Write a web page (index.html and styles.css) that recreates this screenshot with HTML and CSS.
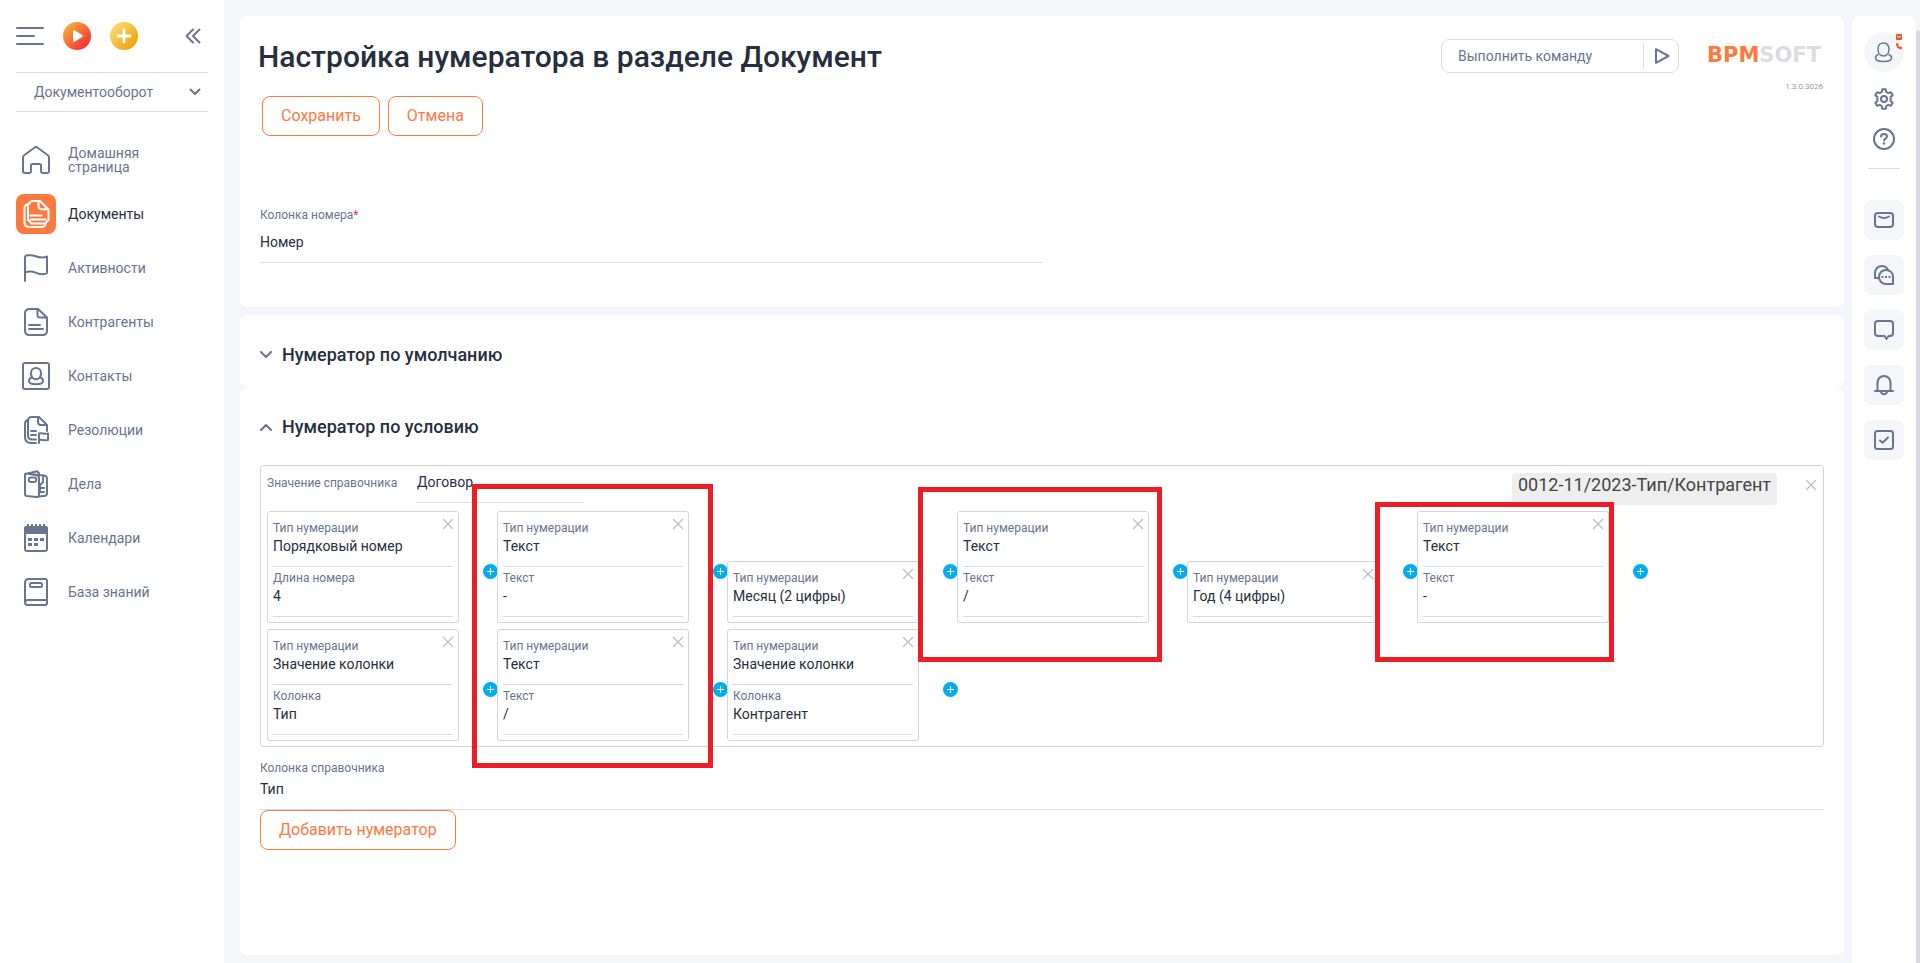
FILE: index.html
```html
<!DOCTYPE html>
<html lang="ru">
<head>
<meta charset="utf-8">
<title>Настройка нумератора в разделе Документ</title>
<link rel="stylesheet" href="styles.css">
</head>
<body>
<svg class="sprite" aria-hidden="true">
  <symbol id="close" viewBox="0 0 12 12"><path d="M1 1l10 10M11 1L1 11" fill="none" stroke="#bdbdbd" stroke-width="1.2"/></symbol>
  <symbol id="plus" viewBox="0 0 15 15"><circle cx="7.5" cy="7.5" r="7.5" fill="#00aeef"/><path d="M7.5 4v7M4 7.5h7" stroke="#fff" stroke-width="1.1"/></symbol>
</svg>
<div class="app">
  <aside class="sidebar">
    <div class="tools">
      <button class="bare" aria-label="Меню"><svg width="28" height="20" viewBox="0 0 28 20"><path d="M1 2h26M1 10h17M1 18h26" class="ln"/></svg></button>
      <button class="bare" aria-label="Запустить процесс"><svg width="28" height="28" viewBox="0 0 28 28"><defs><linearGradient id="g1" x1="0.1" y1="0.1" x2="0.85" y2="0.85"><stop offset="0" stop-color="#f9b233"/><stop offset="1" stop-color="#f72f37"/></linearGradient></defs><circle cx="14" cy="14" r="14" fill="url(#g1)"/><path d="M11 9.2v9.6l8-4.8z" fill="#fff" stroke="#fff" stroke-width="2" stroke-linejoin="round"/></svg></button>
      <button class="bare" aria-label="Добавить"><svg width="28" height="28" viewBox="0 0 28 28"><defs><linearGradient id="g2" x1="0.1" y1="0.1" x2="0.85" y2="0.85"><stop offset="0" stop-color="#fbdb78"/><stop offset="1" stop-color="#f2a30c"/></linearGradient></defs><circle cx="14" cy="14" r="14" fill="url(#g2)"/><path d="M14 8v12M8 14h12" stroke="#fff" stroke-width="2.8" stroke-linecap="round"/></svg></button>
      <button class="bare collapse" aria-label="Свернуть"><svg width="16" height="16" viewBox="0 0 16 16"><path d="M8 1.5L1.5 8 8 14.5M14.5 1.5L8 8l6.500 6.500" class="ln"/></svg></button>
    </div>
    <button class="workplace">Документооборот<svg width="12" height="8" viewBox="0 0 12 8"><path d="M1.500 1.500L6 6l4.500-4.500" class="ln"/></svg></button>
    <nav class="menu">
      <a href="#"><span class="ico"><svg viewBox="0 0 28 28"><path class="ln" d="M1 25V11.500c0-.9.400-1.700 1.100-2.300L12.300 1.700a2.700 2.700 0 0 1 3.400 0l10.200 7.500c.7.600 1.100 1.400 1.100 2.300V25c0 1.100-.9 2-2 2h-4c-1.100 0-2-.9-2-2v-5.500c0-.8-.7-1.500-1.500-1.500h-7c-.8 0-1.500.7-1.500 1.500V25c0 1.100-.9 2-2 2H3c-1.100 0-2-.9-2-2z"/></svg></span>Домашняя страница</a>
      <a href="#" class="active"><span class="ico"><svg viewBox="0 0 28 28"><path class="ln" d="M18 1H9.500L6 4.500V20l3.500 3.500H23l3.500-3.500V9.500zM16.500 1.500V6c0 2 1.200 3.300 3.500 3.300h6M8.500 15.500h11M8.500 19.500h15M6 4c-2 .5-3.500 2-3.500 4.500V22c0 3 2 5 5 5h12c2 0 3.500-1 4-3"/></svg></span>Документы</a>
      <a href="#"><span class="ico"><svg viewBox="0 0 28 28"><path class="ln" d="M3 27V3.500C3 2 4 1.500 5.500 1.300 8 1 10.500 1 13 2c4 1.600 8 2.300 12 .5v16c0 .6-.3 1-1 1.200-4 1-7 .5-10.500-1-3.500-1.500-7-1.500-10.500 0"/></svg></span>Активности</a>
      <a href="#"><span class="ico"><svg viewBox="0 0 28 28"><path class="ln" d="M16 1H7.500C4.500 1 3 2.700 3 5.500v17C3 25.300 4.500 27 7.500 27h13c3 0 4.500-1.700 4.500-4.500V9.500zM15.500 1.500V7c0 1.700.8 2.500 2.500 2.500h6.500M7 17h11M7 21h14"/></svg></span>Контрагенты</a>
      <a href="#"><span class="ico"><svg viewBox="0 0 28 28"><path class="ln" d="M3 1h22a2 2 0 0 1 2 2v22a2 2 0 0 1-2 2H3a2 2 0 0 1-2-2V3c0-1.100.9-2 2-2zM14 6c-3 0-5 2.200-5 5.200 0 3.600 2 6 5 6s5-2.400 5-6C19 8.200 17 6 14 6zM9.500 15.500C7.800 16.200 7 17.500 7 19c0 2.200 2.300 3.200 7 3.200s7-1 7-3.200c0-1.500-.8-2.800-2.500-3.500"/></svg></span>Контакты</a>
      <a href="#"><span class="ico"><svg viewBox="0 0 28 28"><path class="ln" d="M14 23.500h-4c-2.500 0-4-1.500-4-4V5c0-2.500 1.500-4 4-4h7l8 8v6M16 1.500V6c0 2 1 3 3 3h5.500M9 15h5M9 19h5M5.500 4C4 4.500 3 6 3 8v13c0 4 2 6 6 6h5M17 27V17.500c3-1 5 1 9 0V24c-4 1-6-1-9 0"/></svg></span>Резолюции</a>
      <a href="#"><span class="ico"><svg viewBox="0 0 28 28"><path class="ln" d="M4 3.500l10 1.500c2 .3 3 1 3 3v17c0 1.600-1 2.200-2.500 2L5 26c-1.300-.2-2-.8-2-2V4.500c0-.8.400-1.100 1-1zM5.500 3.500L15 1.200l2 2v2M12 4.500l10 1c2 .3 3 1.500 3 3.500v14c0 2-1 3-3 3l-6 .5M21 6v6l-3 3v5M18 18h4M18 22h4M9 7.500h3a2 2 0 0 1 0 4.500H9a2 2 0 0 1 0-4.500z"/></svg></span>Дела</a>
      <a href="#"><span class="ico"><svg viewBox="0 0 28 28"><path fill="#68758f" d="M2 4q0-2 2-2h1V0h2v2h2V0h2v2h2V0h2v2h2V0h2v2h2V0h2v2h1q2 0 2 2v6H2zM6 14h4v3H6zM12 14h4v3h-4zM18 14h4v3h-4zM6 19h4v3H6zM12 19h4v3h-4z"/><path class="ln" d="M3 9v16q0 2 2 2h18q2 0 2-2V9"/></svg></span>Календари</a>
      <a href="#"><span class="ico"><svg viewBox="0 0 28 28"><path class="ln" d="M25 22H6c-2 0-3 1-3 2.500S4.500 27 6 27h17c1.300 0 2-.7 2-2V3c0-1.300-.7-2-2-2H7C4.500 1 3 2.500 3 5v19M9.500 5h9a1.500 1.500 0 0 1 1.500 1.500v1A1.500 1.500 0 0 1 18.500 9h-9A1.500 1.500 0 0 1 8 7.500v-1A1.500 1.500 0 0 1 9.500 5z"/></svg></span>База знаний</a>
    </nav>
  </aside>

  <main class="main">
    <section class="panel head">
      <div class="headrow">
        <h1>Настройка нумератора в разделе Документ</h1>
        <div class="command">
          <input type="text" aria-label="Выполнить команду" placeholder="Выполнить команду">
          <button class="bare" aria-label="Выполнить"><svg width="16" height="18" viewBox="0 0 16 18"><path d="M2 2.200v13.600L14.500 9z" class="ln"/></svg></button>
        </div>
        <div class="brand">
          <div class="logo"><span>BPM</span>SOFT</div>
          <div class="version">1.3.0.3026</div>
        </div>
      </div>
      <div class="actions"><button class="btn">Сохранить</button><button class="btn">Отмена</button></div>
      <div class="field number"><label for="col">Колонка номера<b>*</b></label><input id="col" value="Номер"></div>
    </section>

    <section class="panel fold">
      <h2><button class="bare"><svg width="12" height="8" viewBox="0 0 12 8"><path d="M1 1l5 5 5-5" class="ln"/></svg>Нумератор по умолчанию</button></h2>
    </section>

    <section class="panel cond">
      <h2><button class="bare"><svg width="12" height="8" viewBox="0 0 12 8"><path d="M1 7l5-5 5 5" class="ln"/></svg>Нумератор по условию</button></h2>
      <div class="builder">
        <div class="bhead">
          <label for="ref">Значение справочника</label><input id="ref" value="Договор">
          <output class="preview">0012-11/2023-Тип/Контрагент</output>
          <button class="bare" aria-label="Удалить нумератор"><svg width="12" height="12"><use href="#close"/></svg></button>
        </div>
        <div class="lines">
        <div class="line">
          <div class="part"><button class="bare x" aria-label="Удалить"><svg width="12" height="12"><use href="#close"/></svg></button><div class="field"><label for="a1">Тип нумерации</label><input id="a1" value="Порядковый номер"></div><div class="field"><label for="a2">Длина номера</label><input id="a2" value="4"></div></div>
          <button class="bare add" aria-label="Добавить часть"><svg width="15" height="15"><use href="#plus"/></svg></button>
          <div class="part"><button class="bare x" aria-label="Удалить"><svg width="12" height="12"><use href="#close"/></svg></button><div class="field"><label for="b1">Тип нумерации</label><input id="b1" value="Текст"></div><div class="field"><label for="b2">Текст</label><input id="b2" value="-"></div></div>
          <button class="bare add" aria-label="Добавить часть"><svg width="15" height="15"><use href="#plus"/></svg></button>
          <div class="part"><button class="bare x" aria-label="Удалить"><svg width="12" height="12"><use href="#close"/></svg></button><div class="field"><label for="c1">Тип нумерации</label><input id="c1" value="Месяц (2 цифры)"></div></div>
          <button class="bare add" aria-label="Добавить часть"><svg width="15" height="15"><use href="#plus"/></svg></button>
          <div class="part"><button class="bare x" aria-label="Удалить"><svg width="12" height="12"><use href="#close"/></svg></button><div class="field"><label for="d1">Тип нумерации</label><input id="d1" value="Текст"></div><div class="field"><label for="d2">Текст</label><input id="d2" value="/"></div></div>
          <button class="bare add" aria-label="Добавить часть"><svg width="15" height="15"><use href="#plus"/></svg></button>
          <div class="part"><button class="bare x" aria-label="Удалить"><svg width="12" height="12"><use href="#close"/></svg></button><div class="field"><label for="e1">Тип нумерации</label><input id="e1" value="Год (4 цифры)"></div></div>
          <button class="bare add" aria-label="Добавить часть"><svg width="15" height="15"><use href="#plus"/></svg></button>
          <div class="part"><button class="bare x" aria-label="Удалить"><svg width="12" height="12"><use href="#close"/></svg></button><div class="field"><label for="f1">Тип нумерации</label><input id="f1" value="Текст"></div><div class="field"><label for="f2">Текст</label><input id="f2" value="-"></div></div>
          <button class="bare add" aria-label="Добавить часть"><svg width="15" height="15"><use href="#plus"/></svg></button>
        </div>
        <div class="line">
          <div class="part"><button class="bare x" aria-label="Удалить"><svg width="12" height="12"><use href="#close"/></svg></button><div class="field"><label for="g1a">Тип нумерации</label><input id="g1a" value="Значение колонки"></div><div class="field"><label for="g2a">Колонка</label><input id="g2a" value="Тип"></div></div>
          <button class="bare add" aria-label="Добавить часть"><svg width="15" height="15"><use href="#plus"/></svg></button>
          <div class="part"><button class="bare x" aria-label="Удалить"><svg width="12" height="12"><use href="#close"/></svg></button><div class="field"><label for="h1">Тип нумерации</label><input id="h1" value="Текст"></div><div class="field"><label for="h2">Текст</label><input id="h2" value="/"></div></div>
          <button class="bare add" aria-label="Добавить часть"><svg width="15" height="15"><use href="#plus"/></svg></button>
          <div class="part"><button class="bare x" aria-label="Удалить"><svg width="12" height="12"><use href="#close"/></svg></button><div class="field"><label for="i1">Тип нумерации</label><input id="i1" value="Значение колонки"></div><div class="field"><label for="i2">Колонка</label><input id="i2" value="Контрагент"></div></div>
          <button class="bare add" aria-label="Добавить часть"><svg width="15" height="15"><use href="#plus"/></svg></button>
        </div>
        </div>
        <div class="mark mark-a"></div>
        <div class="mark mark-b"></div>
        <div class="mark mark-c"></div>
      </div>
      <div class="field refcol"><label for="rc">Колонка справочника</label><input id="rc" value="Тип"></div>
      <button class="btn">Добавить нумератор</button>
    </section>
  </main>

  <aside class="rail">
    <button class="bare avatar" aria-label="Профиль"><svg width="40" height="40" viewBox="0 0 40 40"><path class="thin" d="M19.500 11c-3.200 0-5.500 2.300-5.500 6 0 4 2.200 7 5.500 7s5.500-3 5.500-7c0-3.700-2.300-6-5.500-6zM14.500 22.500c-2 .6-3 1.600-3 3.200 0 2.600 2.700 3.800 8 3.800s8-1.200 8-3.800c0-1.600-1-2.600-3-3.200"/><rect x="32" y="2" width="6" height="6" rx="1" fill="#f4511e"/><path d="M33 4l2 1.500L37 4" fill="none" stroke="#fff"/><path d="M32 11.500l1.500-.8 1.200 1.800-.6.900 1.600 1.700 1-.5 1.600 1.200-.8 1.500c-3 .3-5.700-2.500-5.500-5.800z" fill="#f4511e"/></svg></button>
    <button class="bare" aria-label="Настройки"><svg width="22" height="22" viewBox="0 0 22 22"><path class="ln" d="M9.300 1.200h3.400l.6 2.800 1.900 1.100 2.700-.9 1.800 3-2.100 1.900v3.800l2.100 1.900-1.800 3-2.700-.9-1.900 1.100-.6 2.800H9.300l-.6-2.800-1.900-1.100-2.700.9-1.800-3 2.100-1.900V9.100L2.300 7.200l1.800-3 2.700.9 1.900-1.100z"/><circle class="ln" cx="11" cy="11" r="3"/></svg></button>
    <button class="bare" aria-label="Справка"><svg width="22" height="22" viewBox="0 0 22 22"><circle class="ln" cx="11" cy="11" r="10"/><path class="ln" d="M8 8.500C8 6.800 9.300 6 11 6s3 .9 3 2.500-1.200 2-2.200 2.600c-.6.400-.8.800-.8 1.400"/><circle cx="11" cy="15.500" r="1.300" fill="#68758f"/></svg></button>
    <hr>
    <div class="tiles">
      <button class="bare" aria-label="Почта"><svg viewBox="0 0 22 22"><rect class="ln" x="2" y="4" width="18" height="14" rx="3"/><path class="ln" d="M6 7.500c3.500 2 6.500 2 10 0"/></svg></button>
      <button class="bare" aria-label="Чаты"><svg viewBox="0 0 22 22"><path class="ln" d="M20 20v-7.200C20 8.800 17 6 13 6s-7 3-7 7 3 7 7 7zM5 14H2V9c0-4 3-7 7-7 2.700 0 4.500 1.200 5.700 3.500"/><path d="M8.500 13h9" stroke="#68758f" stroke-width="2" stroke-dasharray="2 1.500"/></svg></button>
      <button class="bare" aria-label="Лента"><svg viewBox="0 0 22 22"><path class="ln" d="M5 2h12a3 3 0 0 1 3 3v9a3 3 0 0 1-3 3h-1.500L13.500 20l-2-3H5a3 3 0 0 1-3-3V5a3 3 0 0 1 3-3z"/></svg></button>
      <button class="bare" aria-label="Уведомления"><svg viewBox="0 0 22 22"><path class="ln" d="M4.500 17V9c0-4 2.700-7 6.500-7s6.500 3 6.500 7v8M2 17h18M8 18c1 3 5 3 6 0"/></svg></button>
      <button class="bare" aria-label="Задачи"><svg viewBox="0 0 22 22"><rect class="ln" x="2" y="2" width="18" height="18" rx="2.500"/><path class="ln" d="M7 11.500l2.500 2.300L15 8.500"/></svg></button>
    </div>
  </aside>
  <div class="scroll"></div>
</div>
</body>
</html>
```
FILE: styles.css
```css
* { box-sizing: border-box; }
body { margin: 0; background: #f5f6fa; color: #252f3e; font: 14px/16px Roboto, "Noto Sans", sans-serif; }
button, input { font: inherit; color: inherit; }
input { border: 0; outline: 0; padding: 0; background: transparent; width: 100%; min-width: 0; }
svg { display: block; }
h1, h2 { margin: 0; }
.sprite { display: none; }
.bare { border: 0; background: none; padding: 0; cursor: pointer; }
.ln { fill: none; stroke: #68758f; stroke-width: 2; stroke-linecap: round; stroke-linejoin: round; }
.thin { fill: none; stroke: #68758f; stroke-width: 1.5; }

.app { display: grid; grid-template-columns: 224px 1fr 64px 4px; min-height: 100vh; }

.sidebar { background: #fff; padding: 22px 16px; }
.tools { display: flex; align-items: center; gap: 19px; height: 28px; }
.collapse { margin-left: auto; margin-right: 7px; }
.workplace { display: flex; align-items: center; justify-content: space-between; width: 100%; height: 40px; margin-top: 22px; padding: 0 7px 0 18px; background: none; border: solid #dadbe3; border-width: 1px 0; color: #68758f; }
.menu { display: grid; gap: 14px; margin-top: 28px; }
.menu a { display: flex; align-items: center; gap: 12px; height: 40px; padding-right: 40px; color: #68758f; line-height: 14px; text-decoration: none; }
.menu .ico { flex: none; display: grid; place-items: center; width: 40px; height: 40px; border-radius: 8px; }
.ico svg { width: 28px; height: 28px; }
.menu .active { color: #252f3e; }
.active .ico { background: #ff783e; }
.active .ln { stroke: #fff; }

.main { display: flex; flex-direction: column; min-width: 0; padding: 16px 8px 8px 16px; }
.panel { background: #fff; border-radius: 8px; padding: 0 20px; }
.head { padding-bottom: 44px; margin-bottom: 8px; }
.headrow { display: flex; align-items: flex-start; padding-top: 20px; margin-right: -2px; }
h1 { flex: 1; margin-left: -2px; font-size: 30px; line-height: 42px; font-weight: 500; }
.command { display: flex; align-items: center; width: 238px; height: 34px; margin: 3px 28px 0 0; padding-left: 16px; border: 1px solid #dadbe3; border-radius: 8px; }
.command input { flex: 1; }
.command input::placeholder { color: #68758f; opacity: 1; }
.command button { height: 24px; padding: 0 8px 0 10px; border-left: 1px solid #dadbe3; }
.brand { width: 119px; padding-top: 7px; }
.logo { font: bold 21px/24px "DejaVu Sans", sans-serif; color: #dadbe3; }
.logo span { color: #ff783e; }
.version { margin-top: 14px; padding-right: 3px; font-size: 8px; line-height: 12px; text-align: right; color: #999; }
.actions { display: flex; gap: 8px; padding: 3px 0 0 2px; }
.btn { height: 40px; padding: 0 18px; border: 1px solid #ff783e; border-radius: 8px; background: #fff; color: #ff783e; font-size: 16px; }
.field { display: flex; flex-direction: column; border-bottom: 1px solid #dadbe3; }
.field label, .bhead label { font-size: 12px; line-height: 16px; color: #68758f; }
.field b { color: #f5333f; font-weight: 400; }
.number { width: 50%; margin-top: 71px; height: 56px; }
.number input { margin-top: 10px; height: 18px; }

h2 { font-size: 18px; line-height: 24px; font-weight: 500; }
h2 button { display: flex; align-items: center; gap: 10px; }
.fold { height: 72px; padding-top: 28px; }
.cond { flex: 1; padding-top: 28px; }
.builder { position: relative; margin-top: 26px; padding: 0 6px 5px; border: 1px solid #d5d5d5; border-radius: 3px; }
.bhead { display: flex; align-items: flex-start; height: 45px; }
.bhead label { width: 150px; padding-top: 9px; }
.bhead input { width: 166px; height: 37px; padding-bottom: 4px; border-bottom: 1px solid #dadbe3; }
.preview { margin: 7px 28px 0 auto; padding: 0 6px; height: 32px; border-radius: 4px; background: #eee; color: #444; font-size: 18px; line-height: 24px; }
.bhead button { margin-top: 13px; }
.lines { display: grid; gap: 6px; }
.line { display: flex; align-items: flex-end; height: 112px; }
.part { position: relative; z-index: 1; width: 192px; margin-right: 24px; padding: 0 5px 5px; background: #fff; border: 1px solid #d5d5d5; border-radius: 3px; }
.x { position: absolute; top: 6px; right: 4px; }
.part .field { height: 50px; padding-top: 3px; }
.part .field:nth-child(2) { height: 55px; padding-top: 8px; }
.part input { height: 20px; }
.add { align-self: center; margin-right: -1px; padding-top: 8px; }
.refcol { margin-top: 13px; height: 50px; }
.refcol input { margin-top: 2px; height: 22px; }
.mark { position: absolute; z-index: 2; border: 5px solid #ee1c25; }
.mark-a { left: 211px; top: 18px; width: 241px; height: 284px; }
.mark-b { left: 657px; top: 21px; width: 244px; height: 175px; }
.mark-c { left: 1114px; top: 36px; width: 239px; height: 160px; }

.rail { display: flex; flex-direction: column; align-items: center; margin-top: 16px; padding-top: 16px; background: #fff; border-radius: 8px 8px 0 0; }
.avatar { border-radius: 20px; background: #f5f6fa; margin-bottom: 16px; }
.rail > button:nth-child(2) { margin-bottom: 18px; }
.rail hr { width: 32px; height: 1px; margin: 18px 0 31px; border: 0; background: #dadbe3; }
.tiles { display: grid; gap: 15px; }
.tiles button { display: grid; place-items: center; width: 40px; height: 40px; border-radius: 8px; background: #f5f6fa; }
.tiles svg { width: 22px; height: 22px; }
.scroll { margin-top: 30px; background: #dadbe1; border-radius: 2px 2px 0 0; }
```
